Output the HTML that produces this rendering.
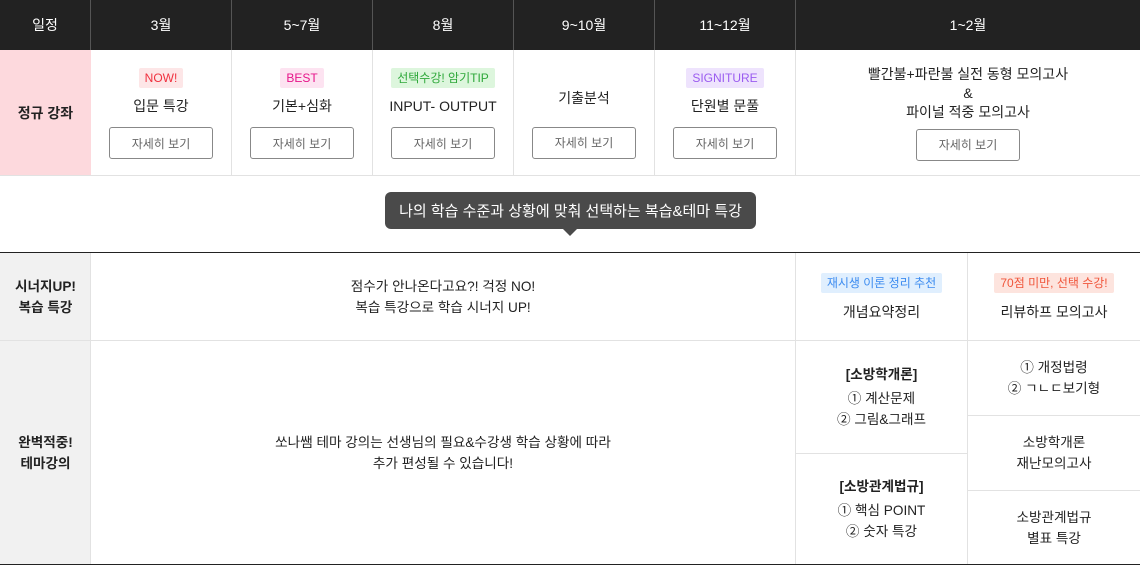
<!DOCTYPE html>
<html><head><meta charset="utf-8"><style>
*{margin:0;padding:0;box-sizing:border-box}
body{width:1140px;height:565px;background:#fff;font-family:"Liberation Sans","Noto Sans CJK KR",sans-serif;color:#222;position:relative;overflow:hidden}
.a{position:absolute;display:flex;flex-direction:column;align-items:center;justify-content:center;text-align:center}
.h{top:0;height:50px;background:#222;color:#fff;font-size:14px;border-right:1px solid #555}
.c{border-right:1px solid #e2e2e2}
.tag{font-size:12px;padding:2px 6px;border-radius:2px;line-height:16px}
.t{font-size:14px;margin-top:9px;line-height:18px}
.btn{width:104px;height:32px;border:1px solid #888;border-radius:3px;font-size:12px;color:#666;display:flex;align-items:center;justify-content:center;margin-top:12px}
.s{font-size:13.6px;line-height:21px}
.b{font-weight:bold}
</style></head><body>
<div class="a h" style="left:0;width:91px">일정</div>
<div class="a h" style="left:91px;width:141px">3월</div>
<div class="a h" style="left:232px;width:141px">5~7월</div>
<div class="a h" style="left:373px;width:141px">8월</div>
<div class="a h" style="left:514px;width:141px">9~10월</div>
<div class="a h" style="left:655px;width:141px">11~12월</div>
<div class="a h" style="left:796px;width:344px;border:0">1~2월</div>

<div class="a" style="left:0;top:50px;width:91px;height:125px;background:#fdd9dd;font-weight:bold;font-size:14px">정규 강좌</div>
<div class="a c" style="left:91px;top:50px;width:141px;height:125px;padding-top:2px"><span class="tag" style="background:#fde6e7;color:#f0313f">NOW!</span><div class="t">입문 특강</div><div class="btn">자세히 보기</div></div>
<div class="a c" style="left:232px;top:50px;width:141px;height:125px;padding-top:2px"><span class="tag" style="background:#fde3f1;color:#e6158a">BEST</span><div class="t">기본+심화</div><div class="btn">자세히 보기</div></div>
<div class="a c" style="left:373px;top:50px;width:141px;height:125px;padding-top:2px"><span class="tag" style="background:#ddf6dd;color:#2ea83a">선택수강! 암기TIP</span><div class="t">INPUT- OUTPUT</div><div class="btn">자세히 보기</div></div>
<div class="a c" style="left:514px;top:50px;width:141px;height:125px;padding-top:22px"><div class="t" style="margin:0">기출분석</div><div class="btn" style="margin-top:20px">자세히 보기</div></div>
<div class="a c" style="left:655px;top:50px;width:141px;height:125px;padding-top:2px"><span class="tag" style="background:#eee3fd;color:#9b5cf0">SIGNITURE</span><div class="t">단원별 문풀</div><div class="btn">자세히 보기</div></div>
<div class="a" style="left:796px;top:50px;width:344px;height:125px"><div class="s" style="line-height:19px;font-size:14px">빨간불+파란불 실전 동형 모의고사<br>&amp;<br>파이널 적중 모의고사</div><div class="btn" style="margin-top:7px">자세히 보기</div></div>
<div style="position:absolute;left:0;top:175px;width:1140px;height:1px;background:#e2e2e2"></div>

<div class="a" style="left:385px;top:192px;width:371px;height:37px;background:#4a4a4a;color:#fff;border-radius:6px;font-size:15px">나의 학습 수준과 상황에 맞춰 선택하는 복습&amp;테마 특강</div>
<div style="position:absolute;left:563px;top:229px;border-left:7px solid transparent;border-right:7px solid transparent;border-top:7px solid #4a4a4a"></div>

<div style="position:absolute;left:0;top:252px;width:1140px;height:1px;background:#222"></div>
<div style="position:absolute;left:0;top:564px;width:1140px;height:1px;background:#222"></div>
<div class="a b" style="left:0;top:253px;width:91px;height:311px;background:#f1f1f1"></div>
<div class="a b s" style="left:0;top:253px;width:91px;height:87px">시너지UP!<br>복습 특강</div>
<div class="a b s" style="left:0;top:341px;width:91px;height:223px">완벽적중!<br>테마강의</div>
<div style="position:absolute;left:0;top:340px;width:1140px;height:1px;background:#e2e2e2"></div>
<div style="position:absolute;left:90px;top:253px;width:1px;height:311px;background:#e2e2e2"></div>
<div style="position:absolute;left:795px;top:253px;width:1px;height:311px;background:#e2e2e2"></div>
<div style="position:absolute;left:967px;top:253px;width:1px;height:311px;background:#e2e2e2"></div>
<div style="position:absolute;left:796px;top:453px;width:171px;height:1px;background:#e2e2e2"></div>
<div style="position:absolute;left:968px;top:415px;width:172px;height:1px;background:#e2e2e2"></div>
<div style="position:absolute;left:968px;top:490px;width:172px;height:1px;background:#e2e2e2"></div>

<div class="a s" style="left:91px;top:253px;width:704px;height:87px">점수가 안나온다고요?! 걱정 NO!<br>복습 특강으로 학습 시너지 UP!</div>
<div class="a" style="left:796px;top:253px;width:171px;height:87px"><span class="tag" style="background:#e0effe;color:#3d8cf0">재시생 이론 정리 추천</span><div class="t" style="margin-top:10px">개념요약정리</div></div>
<div class="a" style="left:968px;top:253px;width:172px;height:87px"><span class="tag" style="background:#fde4de;color:#f0553a">70점 미만, 선택 수강!</span><div class="t" style="margin-top:10px">리뷰하프 모의고사</div></div>

<div class="a s" style="left:91px;top:341px;width:704px;height:223px">쏘나쌤 테마 강의는 선생님의 필요&amp;수강생 학습 상황에 따라<br>추가 편성될 수 있습니다!</div>
<div class="a s" style="left:796px;top:341px;width:171px;height:112px"><b>[소방학개론]</b><span style="margin-top:3px">① 계산문제<br>② 그림&amp;그래프</span></div>
<div class="a s" style="left:796px;top:454px;width:171px;height:110px"><b>[소방관계법규]</b><span style="margin-top:3px">① 핵심 POINT<br>② 숫자 특강</span></div>
<div class="a s" style="left:968px;top:341px;width:172px;height:74px">① 개정법령<br>② ㄱㄴㄷ보기형</div>
<div class="a s" style="left:968px;top:416px;width:172px;height:74px">소방학개론<br>재난모의고사</div>
<div class="a s" style="left:968px;top:491px;width:172px;height:73px">소방관계법규<br>별표 특강</div>
</body></html>
